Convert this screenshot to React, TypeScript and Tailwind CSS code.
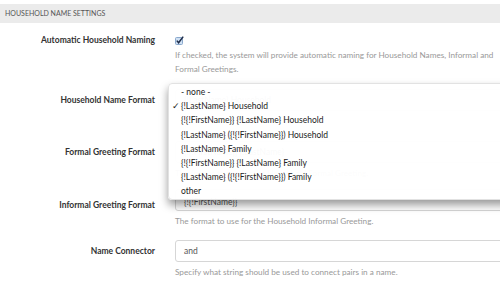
const items = [
  "- none -",
  "{!LastName} Household",
  "{!{!FirstName}} {!LastName} Household",
  "{!LastName} ({!{!FirstName}}) Household",
  "{!LastName} Family",
  "{!{!FirstName}} {!LastName} Family",
  "{!LastName} ({!{!FirstName}}) Family",
  "other",
];

function Label({ children }: { children: React.ReactNode }) {
  return (
    <div className="w-[155px] shrink-0 text-right text-[8.5px] font-bold text-[#333]">
      {children}
    </div>
  );
}

function Input({ value, low }: { value: string; low?: boolean }) {
  return (
    <div
      className={
        low
          ? "flex h-[22px] w-[340px] items-end rounded-[3px] border border-[#d6d6d6] bg-white px-[8px] pb-[1px] text-[8.5px] text-[#555]"
          : "flex h-[22px] w-[340px] items-center rounded-[3px] border border-[#d6d6d6] bg-white px-[8px] text-[8.5px] text-[#555]"
      }
    >
      {value}
    </div>
  );
}

function Help({ children }: { children: React.ReactNode }) {
  return <p className="mt-[3px] text-[8.2px] leading-[14px] text-[#999]">{children}</p>;
}

export default function App() {
  return (
    <main
      className="relative h-[288px] w-[500px] overflow-hidden bg-white pt-[4px]"
      style={{ fontFamily: "Lato, 'Open Sans', sans-serif" }}
    >
      {/* Section header */}
      <div className="flex h-[19px] items-center bg-[#ebebeb] px-[5px] text-[7px] uppercase text-[#555]">
        Household Name Settings
      </div>

      {/* Automatic naming */}
      <div className="mt-[12px] flex">
        <Label>
          <div className="flex h-[10px] items-center justify-end">Automatic Household Naming</div>
        </Label>
        <div className="ml-[20px] w-[325px]">
          <div className="flex h-[10px] items-center">
            <svg width="9" height="9" viewBox="0 0 9 9">
              <rect x="0.5" y="1.5" width="7" height="7" rx="1" fill="#cfe0f3" stroke="#8aa8cc" />
              <path d="M1.8 4.6 L3.6 6.8 L8.2 0.6" fill="none" stroke="#1f2d4a" strokeWidth="1.5" />
            </svg>
          </div>
          <Help>
            If checked, the system will provide automatic naming for Household Names, Informal and
            Formal Greetings.
          </Help>
        </div>
      </div>

      {/* Household name format */}
      <div className="mt-[13px] flex items-center">
        <Label>Household Name Format</Label>
        <div className="ml-[20px]">
          <Input value="{!LastName} Household" />
        </div>
      </div>

      {/* Formal greeting */}
      <div className="mt-[30px] flex">
        <Label>
          <div className="flex h-[22px] items-center justify-end">Formal Greeting Format</div>
        </Label>
        <div className="ml-[20px]">
          <Input value="{!{!FirstName}} {!LastName}" />
          <Help>The format to use for the Household Formal Greeting.</Help>
        </div>
      </div>

      {/* Informal greeting */}
      <div className="mt-[9px] flex">
        <Label>
          <div className="pt-[10px]">Informal Greeting Format</div>
        </Label>
        <div className="ml-[20px]">
          <Input value="{!{!FirstName}}" low />
          <Help>The format to use for the Household Informal Greeting.</Help>
        </div>
      </div>

      {/* Name connector */}
      <div className="mt-[12px] flex">
        <Label>
          <div className="flex h-[22px] items-center justify-end">Name Connector</div>
        </Label>
        <div className="ml-[20px]">
          <Input value="and" />
          <Help>Specify what string should be used to connect pairs in a name.</Help>
        </div>
      </div>

      {/* Open select menu */}
      <ul className="absolute left-[168px] top-[83px] w-[360px] rounded-[4px] border border-[#e2e2e2] bg-white/[0.97] pt-[1px] text-[8.5px] leading-[14.2px] text-[#222] shadow-[0_5px_9px_rgba(0,0,0,0.4)]">
        {items.map((item, i) => (
          <li key={item} className="relative pl-[12px]">
            {i === 1 && <span className="absolute left-[3px] top-0">✓</span>}
            {item}
          </li>
        ))}
      </ul>
    </main>
  );
}
